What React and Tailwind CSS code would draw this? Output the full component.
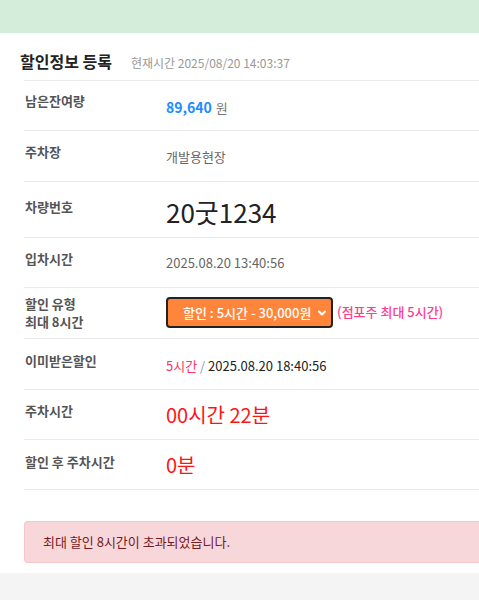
import React from 'react';

const Row = ({ h, labelPt, valuePt, label, children }) => (
  <div className={`flex border-b border-[#eaeaea] ${h}`}>
    <div className={`w-[142px] shrink-0 pl-px text-[13px] font-bold leading-[18px] text-[#555] ${labelPt}`}>
      {label}
    </div>
    <div className={`flex-1 ${valuePt}`}>{children}</div>
  </div>
);

const App = () => {
  return (
    <div className="min-h-screen bg-[#f4f4f4] font-['Noto_Sans_CJK_KR','Noto_Sans',sans-serif]">
      <div className="h-[33px] bg-[#d4edda]"></div>

      <div className="bg-white pl-5 pt-4 pb-[10px]">
        <div className="mb-[7px] flex items-center gap-[19px]">
          <h2 className="text-[16px] font-bold leading-6 text-[#222]">할인정보 등록</h2>
          <span className="pt-[3px] text-[12px] text-[#999]">현재시간 2025/08/20 14:03:37</span>
        </div>

        <div className="ml-1 border-t border-[#eaeaea]">
          <Row h="h-[50px]" labelPt="pt-[11px]" valuePt="pt-[15px]" label="남은잔여량">
            <p className="leading-5">
              <span className="text-[14px] font-bold text-[#1a8cff]">89,640</span>
              <span className="ml-1 text-[13px] text-[#777]">원</span>
            </p>
          </Row>

          <Row h="h-[51px]" labelPt="pt-[12px]" valuePt="pt-[16px]" label="주차장">
            <p className="text-[13px] leading-5 text-[#666]">개발용현장</p>
          </Row>

          <Row h="h-[56px]" labelPt="pt-[16px]" valuePt="pt-[14px]" label="차량번호">
            <p className="text-[26px] leading-8 text-[#222]">20굿1234</p>
          </Row>

          <Row h="h-[50px]" labelPt="pt-[12px]" valuePt="pt-[15px]" label="입차시간">
            <p className="text-[13px] leading-5 text-[#666]">2025.08.20 13:40:56</p>
          </Row>

          <Row
            h="h-[51px]"
            labelPt="pt-[7px]"
            valuePt="pt-[9px]"
            label={
              <>
                할인 유형
                <br />
                최대 8시간
              </>
            }
          >
            <div className="flex items-start">
              <div className="flex h-[31px] w-[167px] items-center rounded-[4px] border-2 border-[#222] bg-[#ff853a] pl-[15px] pr-[4px] text-[13px] font-medium text-white">
                <span className="flex-1">할인 : 5시간 - 30,000원</span>
                <svg width="10" height="10" viewBox="0 0 10 10" fill="none" stroke="white" strokeWidth="2" strokeLinecap="round" strokeLinejoin="round">
                  <path d="M2 3.5 L5 6.5 L8 3.5" />
                </svg>
              </div>
              <span className="ml-1 pt-[5px] text-[13px] font-medium leading-5 text-[#ff3d8f]">(점포주 최대 5시간)</span>
            </div>
          </Row>

          <Row h="h-[51px]" labelPt="pt-[13px]" valuePt="pt-[17px]" label="이미받은할인">
            <p className="text-[13px] leading-5 text-[#222]">
              <span className="text-[#ff3366]">5시간</span>
              <span className="text-[#999]"> / </span>
              2025.08.20 18:40:56
            </p>
          </Row>

          <Row h="h-[50px]" labelPt="pt-[12px]" valuePt="pt-[12px]" label="주차시간">
            <p className="text-[20px] leading-[26px] text-[#ff1414]">00시간 22분</p>
          </Row>

          <Row h="h-[50px]" labelPt="pt-[13px]" valuePt="pt-[12px]" label="할인 후 주차시간">
            <p className="text-[20px] leading-[26px] text-[#ff1414]">0분</p>
          </Row>
        </div>

        <div className="ml-1 mt-[31px] flex h-[42px] items-center rounded-l-[4px] border border-r-0 border-[#f5c6cb] bg-[#f8d7da] pl-[18px] text-[13px] text-[#721c24]">
          최대 할인 8시간이 초과되었습니다.
        </div>
      </div>
    </div>
  );
};

export default App;
